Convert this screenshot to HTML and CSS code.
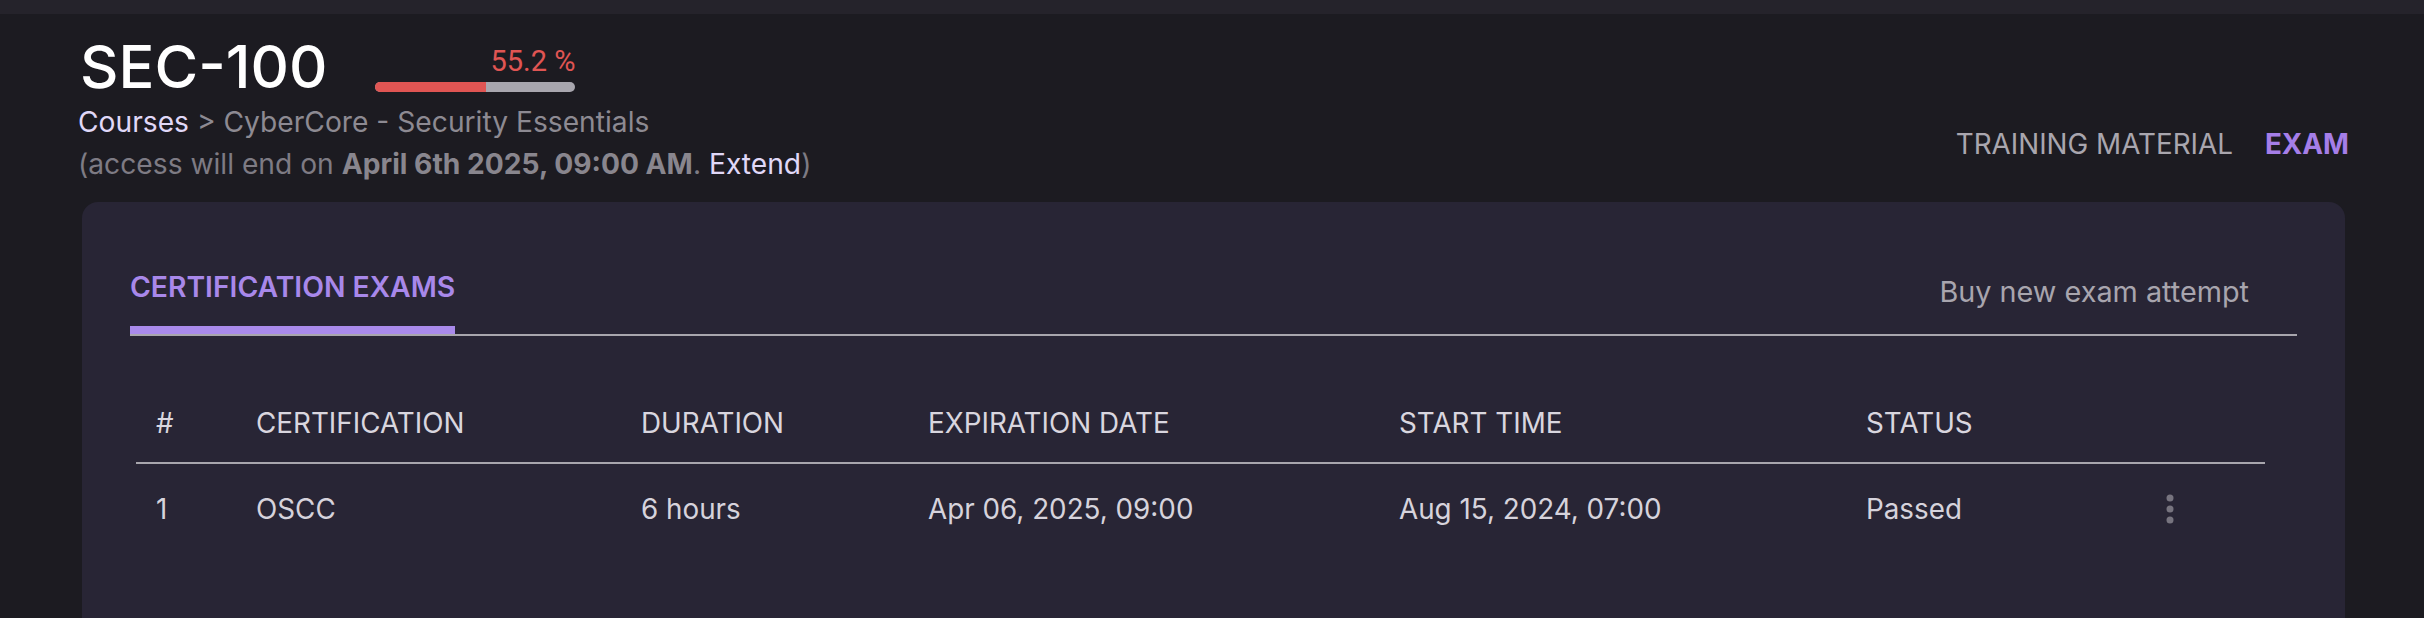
FILE: index.html
```html
<!DOCTYPE html>
<html lang="en">
<head>
<meta charset="utf-8">
<title>SEC-100 Exam</title>
<link rel="stylesheet" href="styles.css">
</head>
<body>
<div class="topbar"></div>
<div class="page">
  <header class="header">
    <div class="header-left">
      <div class="title-row">
        <h1 class="title">SEC-100</h1>
        <div class="progress">
          <div class="progress-label">55.2 %</div>
          <div class="progress-track"><div class="progress-fill" style="width:55.2%"></div></div>
        </div>
      </div>
      <div class="crumbs"><a class="link">Courses</a> <span class="sep">&gt;</span> CyberCore - Security Essentials</div>
      <div class="access">(access will end on <b>April 6th 2025, 09:00 AM</b>. <a class="link">Extend</a>)</div>
    </div>
    <nav class="nav">
      <a class="nav-item">TRAINING MATERIAL</a>
      <a class="nav-item active">EXAM</a>
    </nav>
  </header>
  <section class="card">
    <div class="tabs">
      <div class="tab active">CERTIFICATION EXAMS</div>
      <a class="buy">Buy new exam attempt</a>
    </div>
    <div class="table">
      <div class="row head">
        <div class="cell">#</div>
        <div class="cell">CERTIFICATION</div>
        <div class="cell">DURATION</div>
        <div class="cell">EXPIRATION DATE</div>
        <div class="cell">START TIME</div>
        <div class="cell">STATUS</div>
        <div class="cell"></div>
      </div>
      <div class="row body">
        <div class="cell">1</div>
        <div class="cell">OSCC</div>
        <div class="cell">6 hours</div>
        <div class="cell">Apr 06, 2025, 09:00</div>
        <div class="cell">Aug 15, 2024, 07:00</div>
        <div class="cell">Passed</div>
        <div class="cell kebab-cell">
          <svg class="kebab" width="8" height="30" viewBox="0 0 8 30" aria-hidden="true">
            <circle cx="4" cy="4" r="3.5"/>
            <circle cx="4" cy="15" r="3.5"/>
            <circle cx="4" cy="26" r="3.5"/>
          </svg>
        </div>
      </div>
    </div>
  </section>
</div>
</body>
</html>
```
FILE: styles.css
```css
html, body {
  margin: 0;
  padding: 0;
  overflow: hidden;
  height: 618px;
}
body {
  background: #1c1b21;
  font-family: Inter, "Noto Sans", sans-serif;
  font-size: 27.8px;
  line-height: 1.5;
  color: #d7d4dd;
}
.topbar {
  height: 14px;
  background: #25232b;
}
.page {
  padding: 0 79px 0 78px;
}
.header {
  display: flex;
  justify-content: space-between;
  align-items: flex-end;
  padding-top: 23px;
  padding-bottom: 17px;
}
.title-row {
  display: flex;
  align-items: flex-start;
}
.title {
  margin: 0 0 0 2px;
  font-size: 59.6px;
  line-height: 59px;
  font-weight: 500;
  color: #ffffff;
}
.progress {
  margin-left: 48px;
  margin-top: 10px;
  width: 200px;
  display: flex;
  flex-direction: column;
  align-items: flex-end;
}
.progress-label {
  font-family: Roboto, "Noto Sans", sans-serif;
  font-size: 29px;
  line-height: 28px;
  font-weight: 400;
  color: #e05553;
}
.progress-track {
  margin-top: 7px;
  width: 200px;
  height: 10px;
  border-radius: 5px;
  background: #a8a6ae;
  overflow: hidden;
}
.progress-fill {
  height: 100%;
  background: #e05553;
}
.crumbs {
  margin-top: 6px;
  font-size: 28.2px;
  line-height: 41.7px;
  color: #8d8a92;
}
.link {
  color: #e0d8f8;
  text-decoration: none;
}
.sep {
  color: #8d8a92;
}
.access {
  font-size: 28.2px;
  line-height: 41.7px;
  color: #7e7b84;
}
.access b {
  font-weight: 700;
  color: #89868e;
}
.nav {
  display: flex;
  gap: 32px;
  margin-bottom: 20px;
  margin-right: -4px;
}
.nav-item {
  color: #a9a6ae;
  text-decoration: none;
}
.nav-item.active {
  color: #a57ee8;
  font-weight: 700;
}
.card {
  margin-left: 4px;
  background: #282535;
  border-radius: 16px 16px 0 0;
  padding: 65px 48px 0 48px;
  min-height: 500px;
}
.tabs {
  display: flex;
  justify-content: space-between;
  align-items: flex-end;
  border-bottom: 2px solid #a8a6ad;
}
.tab {
  font-size: 28.3px;
  line-height: 41.7px;
  font-weight: 600;
  color: #a888ea;
  padding-bottom: 17px;
  border-bottom: 8px solid #a98aeb;
}
.buy {
  font-size: 28.8px;
  line-height: 41.7px;
  color: #a8a5ae;
  padding-right: 48px;
  padding-bottom: 21px;
  text-decoration: none;
}
.table {
  margin: 48px 32px 0 6px;
  line-height: 40px;
}
.row {
  display: grid;
  grid-template-columns: 100px 385px 287px 471px 467px 1fr 146px;
}
.row.head {
  border-bottom: 2px solid #a8a6ad;
}
.row.head .cell {
  padding: 19px 20px 19px 20px;
  color: #d9d6df;
}
.row.body .cell {
  padding: 25px 20px 20px 20px;
  color: #d6d3dc;
}
.kebab-cell {
  display: flex;
  align-items: center;
}
.row.body .kebab-cell {
  padding-left: 47px;
}
.kebab {
  fill: #77747f;
  display: block;
}
```
